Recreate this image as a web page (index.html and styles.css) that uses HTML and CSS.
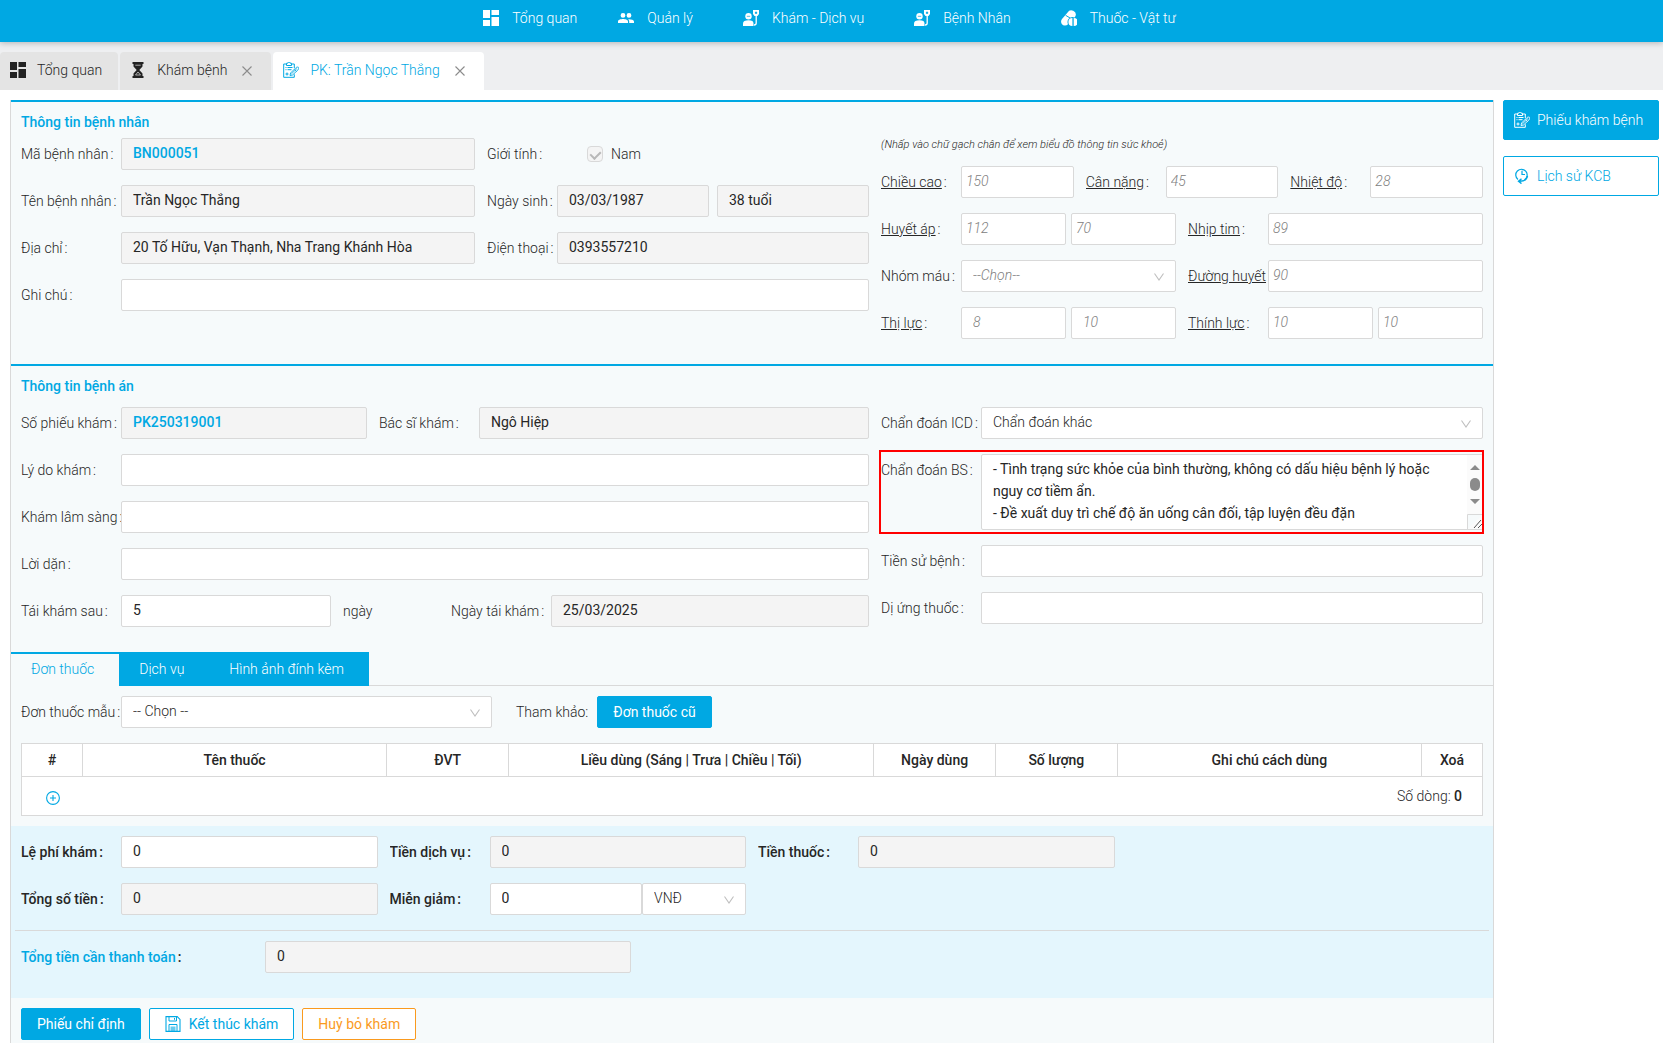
FILE: index.html
```html
<!DOCTYPE html>
<html lang="vi">
<head>
  <meta charset="UTF-8" />
  <title>PK: Trần Ngọc Thắng</title>
  <meta name="viewport" content="width=device-width, initial-scale=1.0" />
  <link rel="stylesheet" href="styles.css">
</head>
<body>
  <!-- shared icons -->
  <svg class="sprite" aria-hidden="true">
    <symbol id="i-dashboard" viewBox="0 0 16 16">
      <path d="M0 0h7v8H0zM8.500 0H16v5H8.500zM0 10h7v6H0zM8.500 7H16v9H8.500z" fill="currentColor" />
    </symbol>
    <symbol id="i-people" viewBox="0 0 16 16">
      <path d="M5 3a2.300 2.300 0 1 1 0 4.800A2.300 2.300 0 0 1 5 3zm6 0a2.300 2.300 0 1 1 0 4.800A2.300 2.300 0 0 1 11 3zM0 13v-1.600C0 9.800 3 9 5 9s5 .8 5 2.400V13zm11.200 0v-1.600c0-.9-.4-1.600-1-2.200 2.300-.2 5.800.5 5.800 2.200V13z" fill="currentColor" />
    </symbol>
    <symbol id="i-patient" viewBox="0 0 16 16">
      <circle cx="5.500" cy="6.300" r="3.200" fill="currentColor" />
      <path d="M0 16v-2.500C0 11.500 2 10.300 5.500 10.300s5 1.200 5 3.200V16z" fill="currentColor" />
      <path d="M10 0h6v4l-1.500 2h-3L10 4z" fill="currentColor" />
      <path d="M12.400 2h1.300v1.500h-1.300zM3.800 6.300h3.400" stroke="#00a8e3" fill="#00a8e3" stroke-width=".7" />
      <path d="M13.200 5.500V13c0 1.500-.8 2-2.200 2" stroke="currentColor" stroke-width="1.300" fill="none" />
    </symbol>
    <symbol id="i-pills" viewBox="0 0 16 16">
      <path d="M6.600 2.600a4.300 4.300 0 0 1 7.800 3.600c-.3.600-.6.900-.9 1.300a5 5 0 0 0-6.500 6.700A4 4 0 0 1 .8 14c-1-1.700-1-3.300.2-5z" fill="currentColor" />
      <path d="m4.600 5.300 5 3" stroke="#00a8e3" stroke-width="1" />
      <path d="M11.400 8v8a4 4 0 0 1 0-8zm1.300 0a4 4 0 0 1 0 8z" fill="currentColor" />
    </symbol>
    <symbol id="i-hourglass" viewBox="0 0 16 16">
      <path d="M2.500 0h11v2h-1v2.500L9.300 8l3.200 3.500V14h1v2h-11v-2h1v-2.500L6.700 8 3.500 4.500V2h-1z" fill="currentColor" />
      <path d="M5.300 3.200h5.400M8 10l2.500 3h-5z" stroke="#e4e4e4" stroke-width=".7" fill="none" />
    </symbol>
    <symbol id="i-clipboard" viewBox="0 0 16 16">
      <path d="M3.500 2H.7v13.300h10.600v-3M8.500 2h2.800v4M3.500 1.300h1.200a1.300 1.300 0 0 1 2.600 0h1.200v2.200h-5z" fill="none" stroke="currentColor" />
      <path d="M2.500 5.500h1M4.500 5.500h5M2.500 7.700h1M4.500 7.700h4M2.500 12h3M4 10.500v3" stroke="currentColor" />
      <path d="m7 13.500.6-2.500 5.200-5.200c.8-.8 2.300-.9 2.700-.5s.2 1.800-.6 2.700L9.500 13z" fill="none" stroke="currentColor" stroke-width=".9" />
      <path d="m8.300 12 5.700-5.600M11.500 7.500l2 2" stroke="currentColor" stroke-width=".8" />
    </symbol>
    <symbol id="i-history" viewBox="0 0 16 16">
      <path d="M4 11.500A5.700 5.700 0 1 1 10.500 11.800M8 2.800v3.700h3" fill="none" stroke="currentColor" stroke-width="1.200" />
      <path d="M13.500 8c-.6 3.800-4 5.500-8.500 5.300M7.500 10.800 4.500 13.300l3 2.300" fill="none" stroke="currentColor" stroke-width="1.400" />
    </symbol>
    <symbol id="i-save" viewBox="0 0 16 16">
      <path d="M1 .6h11.200L15 3.400v12H1z" fill="none" stroke="currentColor" stroke-width="1.100" />
      <path d="M4 1v4h7.500V1M9.500 2v1.800" fill="none" stroke="currentColor" />
      <path d="M4 15V8.500h8V15" fill="none" stroke="currentColor" />
      <path d="M5.500 10.500h5v5h-5z" fill="currentColor" opacity=".6" />
    </symbol>
    <symbol id="i-close" viewBox="0 0 10 10">
      <path d="M.5.5l9 9M9.500.5l-9 9" stroke="currentColor" stroke-width="1.100" />
    </symbol>
    <symbol id="i-down" viewBox="0 0 10 8">
      <path d="M.5.500 5 7 9.500.5" fill="none" stroke="currentColor" stroke-width="1.100" />
    </symbol>
    <symbol id="i-plus" viewBox="0 0 14 14">
      <circle cx="7" cy="7" r="6.400" fill="none" stroke="currentColor" stroke-width="1.100" />
      <path d="M7 4v6M4 7h6" stroke="currentColor" stroke-width="1.100" />
    </symbol>
  </svg>

  <header class="topbar">
    <nav class="nav">
      <a class="nav-item nav-home" href="#"><svg class="icon"><use href="#i-dashboard" /></svg>Tổng quan</a>
      <a class="nav-item" href="#"><svg class="icon"><use href="#i-people" /></svg>Quản lý</a>
      <a class="nav-item" href="#"><svg class="icon"><use href="#i-patient" /></svg>Khám - Dịch vụ</a>
      <a class="nav-item" href="#"><svg class="icon"><use href="#i-patient" /></svg>Bệnh Nhân</a>
      <a class="nav-item" href="#"><svg class="icon"><use href="#i-pills" /></svg>Thuốc - Vật tư</a>
    </nav>
  </header>

  <div class="page-tabs">
    <div class="page-tab"><svg class="icon dark"><use href="#i-dashboard" /></svg>Tổng quan</div>
    <div class="page-tab"><svg class="icon dark"><use href="#i-hourglass" /></svg>Khám bệnh
      <button class="close" type="button" aria-label="Đóng"><svg><use href="#i-close" /></svg></button></div>
    <div class="page-tab active"><svg class="icon"><use href="#i-clipboard" /></svg>PK: Trần Ngọc Thắng
      <button class="close" type="button" aria-label="Đóng"><svg><use href="#i-close" /></svg></button></div>
  </div>

  <div class="layout">
    <main class="panel">
      <!-- patient -->
      <section class="section patient">
        <div class="col-left">
          <h2 class="title">Thông tin bệnh nhân</h2>
          <div class="row">
            <div class="field w-main"><label for="code">Mã bệnh nhân</label><input class="strong" id="code" value="BN000051" readonly></div>
            <div class="field w-side narrow"><label for="gender">Giới tính</label>
              <div class="check"><input type="checkbox" id="gender" checked disabled><span>Nam</span></div></div>
          </div>
          <div class="row">
            <div class="field w-main"><label for="name">Tên bệnh nhân</label><input id="name" value="Trần Ngọc Thắng" readonly></div>
            <div class="field w-side narrow pair"><label for="dob">Ngày sinh</label><input id="dob" value="03/03/1987" readonly><input aria-label="Tuổi" value="38 tuổi" readonly></div>
          </div>
          <div class="row">
            <div class="field w-main"><label for="address">Địa chỉ</label><input id="address" value="20 Tố Hữu, Vạn Thạnh, Nha Trang Khánh Hòa" readonly></div>
            <div class="field w-side narrow"><label for="phone">Điện thoại</label><input id="phone" value="0393557210" readonly></div>
          </div>
          <div class="row">
            <div class="field"><label for="note">Ghi chú</label><input id="note"></div>
          </div>
        </div>

        <div class="col-right vitals">
          <p class="hint">(Nhấp vào chữ gạch chân để xem biểu đồ thông tin sức khoẻ)</p>
          <div class="row">
            <div class="field"><label for="height"><u>Chiều cao</u></label><input id="height" placeholder="150"></div>
            <div class="field"><label for="weight"><u>Cân nặng</u></label><input id="weight" placeholder="45"></div>
            <div class="field"><label for="temp"><u>Nhiệt độ</u></label><input id="temp" placeholder="28"></div>
          </div>
          <div class="row">
            <div class="field pair"><label for="bp"><u>Huyết áp</u></label><input id="bp" placeholder="112"><input aria-label="Tâm trương" placeholder="70"></div>
            <div class="field"><label for="pulse"><u>Nhịp tim</u></label><input id="pulse" placeholder="89"></div>
          </div>
          <div class="row">
            <div class="field"><label for="blood">Nhóm máu</label>
              <div class="select"><select class="empty" id="blood"><option>--Chọn--</option></select><svg><use href="#i-down" /></svg></div></div>
            <div class="field"><label for="sugar"><u>Đường huyết</u></label><input id="sugar" placeholder="90"></div>
          </div>
          <div class="row">
            <div class="field pair"><label for="eye"><u>Thị lực</u></label><input class="indent" id="eye" placeholder="8"><input class="indent" aria-label="Mắt phải" placeholder="10"></div>
            <div class="field pair"><label for="ear"><u>Thính lực</u></label><input id="ear" placeholder="10"><input aria-label="Tai phải" placeholder="10"></div>
          </div>
        </div>
      </section>

      <!-- medical record -->
      <section class="section record">
        <h2 class="title">Thông tin bệnh án</h2>
        <div class="cols">
          <div class="col-left">
            <div class="row">
              <div class="field w-number"><label for="sheet">Số phiếu khám</label><input class="strong" id="sheet" value="PK250319001" readonly></div>
              <div class="field w-doctor"><label for="doctor">Bác sĩ khám</label><input id="doctor" value="Ngô Hiệp" readonly></div>
            </div>
            <div class="row"><div class="field"><label for="reason">Lý do khám</label><input id="reason"></div></div>
            <div class="row"><div class="field"><label for="clinical">Khám lâm sàng</label><input id="clinical"></div></div>
            <div class="row"><div class="field"><label for="advice">Lời dặn</label><input id="advice"></div></div>
            <div class="row">
              <div class="field w-after"><label for="after">Tái khám sau</label><input id="after" value="5"></div>
              <span class="unit">ngày</span>
              <div class="field w-revisit"><label for="revisit">Ngày tái khám</label><input id="revisit" value="25/03/2025" readonly></div>
            </div>
          </div>
          <div class="col-right">
            <div class="row"><div class="field"><label for="icd">Chẩn đoán ICD</label>
              <div class="select"><select id="icd"><option>Chẩn đoán khác</option></select><svg><use href="#i-down" /></svg></div></div></div>
            <div class="row"><div class="field diagnosis"><label for="diag">Chẩn đoán BS</label>
              <textarea id="diag">- Tình trạng sức khỏe của bình thường, không có dấu hiệu bệnh lý hoặc nguy cơ tiềm ẩn.
- Đề xuất duy trì chế độ ăn uống cân đối, tập luyện đều đặn</textarea>
              <svg class="scroll" viewBox="0 0 16 74">
                <path d="M0 0h16v74H0z" fill="#fbfbfb" />
                <path d="M3 15h10L8 10zM3 44h10l-5 5z" fill="#8b8b8b" />
                <rect x="3" y="23" width="10" height="13" rx="5" fill="#8b8b8b" />
                <path d="M.5 74V59.500H16" fill="#f6fafb" stroke="#d9d9d9" />
                <path d="m7 73 7-8M11 73l4-4" stroke="#555" />
              </svg></div></div>
            <div class="row"><div class="field"><label for="history">Tiền sử bệnh</label><input id="history"></div></div>
            <div class="row"><div class="field"><label for="allergy">Dị ứng thuốc</label><input id="allergy"></div></div>
          </div>
        </div>
      </section>

      <!-- prescription -->
      <div class="tabs">
        <button class="tab active" type="button">Đơn thuốc</button>
        <button class="tab" type="button">Dịch vụ</button>
        <button class="tab" type="button">Hình ảnh đính kèm</button>
      </div>
      <section class="prescription">
        <div class="toolbar">
          <div class="field template"><label for="tpl">Đơn thuốc mẫu</label>
            <div class="select"><select id="tpl"><option>-- Chọn --</option></select><svg><use href="#i-down" /></svg></div></div>
          <span class="ref">Tham khảo:</span>
          <button class="btn primary" type="button">Đơn thuốc cũ</button>
        </div>
        <table class="drugs">
          <thead>
            <tr>
              <th class="c1">#</th>
              <th class="c5">Tên thuốc</th>
              <th class="c2">ĐVT</th>
              <th class="c6">Liều dùng (Sáng | Trưa | Chiều | Tối)</th>
              <th class="c2">Ngày dùng</th>
              <th class="c2">Số lượng</th>
              <th class="c5">Ghi chú cách dùng</th>
              <th class="c1">Xoá</th>
            </tr>
          </thead>
          <tbody>
            <tr>
              <td class="add"><button type="button" aria-label="Thêm thuốc"><svg><use href="#i-plus" /></svg></button></td>
              <td class="count" colspan="7">Số dòng: <b>0</b></td>
            </tr>
          </tbody>
        </table>
      </section>

      <!-- fees -->
      <section class="fees">
        <div class="fee-grid">
          <div class="field"><label for="fee">Lệ phí khám</label><input id="fee" value="0"></div>
          <div class="field"><label for="service">Tiền dịch vụ</label><input id="service" value="0" readonly></div>
          <div class="field"><label for="drug">Tiền thuốc</label><input id="drug" value="0" readonly></div>
          <div class="field new-line"><label for="sum">Tổng số tiền</label><input id="sum" value="0" readonly></div>
          <div class="field discount"><label for="off">Miễn giảm</label><input id="off" value="0">
            <div class="select"><select aria-label="Đơn vị"><option>VNĐ</option></select><svg><use href="#i-down" /></svg></div></div>
        </div>
        <div class="total">
          <div class="field"><label for="total"><span>Tổng tiền cần thanh toán</span></label><input id="total" value="0" readonly></div>
        </div>
      </section>

      <div class="actions">
        <button class="btn primary" type="button">Phiếu chỉ định</button>
        <button class="btn outline" type="button"><svg class="icon"><use href="#i-save" /></svg>Kết thúc khám</button>
        <button class="btn warning" type="button">Huỷ bỏ khám</button>
      </div>
    </main>

    <aside class="side">
      <button class="side-btn current" type="button"><svg class="icon"><use href="#i-clipboard" /></svg>Phiếu khám bệnh</button>
      <button class="side-btn" type="button"><svg class="icon"><use href="#i-history" /></svg>Lịch sử KCB</button>
    </aside>
  </div>
</body>
</html>
```
FILE: styles.css
```css
* {
  box-sizing: border-box;
}

body {
  margin: 0;
  min-height: 100vh;
  display: flex;
  flex-direction: column;
  background: #fff;
  color: #262626;
  font-family: Roboto, "Noto Sans", sans-serif;
  font-size: 14px;
  font-weight: 300;
  line-height: 22px;
}

button,
input,
select,
textarea {
  font: inherit;
  color: inherit;
}

button {
  cursor: pointer;
}

.sprite {
  position: absolute;
  width: 0;
  height: 0;
}

.icon {
  flex: none;
  width: 16px;
  height: 16px;
}

/* header */
.topbar {
  position: relative;
  height: 42px;
  background: #00a8e3;
  box-shadow: 0 1px 6px rgba(0, 0, 0, 0.25);
}

.nav {
  display: flex;
  justify-content: center;
  padding-right: 4px;
}

.nav-item {
  display: flex;
  align-items: center;
  gap: 13px;
  height: 35px;
  padding: 0 25px;
  color: #fff;
  text-decoration: none;
}

.nav-home {
  padding-right: 16px;
}

/* opened pages */
.page-tabs {
  display: flex;
  gap: 2px;
  padding-top: 10px;
  background: #eeeff1;
}

.page-tab {
  display: flex;
  align-items: center;
  gap: 11px;
  height: 38px;
  padding: 0 16px 2px 10px;
  background: #e4e4e4;
  border-radius: 4px 4px 0 0;
}

.page-tab.active {
  background: #fff;
  color: #00a8e3;
}

.dark {
  color: #222;
}

.close {
  display: flex;
  padding: 4px 3px 2px 4px;
  border: 0;
  background: none;
  color: #8c8c8c;
}

.close svg {
  width: 10px;
  height: 10px;
}

/* layout */
.layout {
  flex: 1;
  display: flex;
  gap: 9px;
  padding: 10px 4px 0 10px;
}

.panel {
  flex: 1;
  min-width: 0;
  background: #f6fafb;
  border: 1px solid #d9d9d9;
  border-width: 0 1px;
}

.side {
  width: 156px;
}

.side-btn {
  display: flex;
  align-items: center;
  gap: 7px;
  width: 100%;
  height: 40px;
  margin-bottom: 16px;
  padding: 0 10px 1px;
  background: #fff;
  border: 1px solid #00a8e3;
  border-radius: 2px;
  color: #00a8e3;
  white-space: nowrap;
}

.side-btn.current {
  background: #00a8e3;
  color: #fff;
}

/* sections */
.section {
  padding: 9px 10px 10px;
  border-top: 2px solid #00a8e3;
}

.patient,
.cols {
  display: flex;
  gap: 12px;
}

.col-left {
  flex: 848 1 0;
  min-width: 0;
}

.col-right {
  flex: 602 1 0;
  min-width: 0;
}

.title {
  margin: 0 0 5px;
  color: #00a8e3;
  font-size: 14px;
  font-weight: 500;
  line-height: 22px;
}

.record .title {
  margin-bottom: 10px;
}

.row {
  display: flex;
  gap: 12px;
  margin-bottom: 15px;
}

.field {
  position: relative;
  flex: 1 1 0;
  display: flex;
  min-width: 0;
}

.field label {
  flex: none;
  width: 100px;
  line-height: 32px;
  white-space: nowrap;
  overflow: hidden;
}

.field label::after {
  content: ":";
  margin-left: 2px;
}

.narrow label {
  width: 70px;
}

.vitals label {
  width: 80px;
}

.field > input,
.select,
.field textarea {
  flex: 1 1 0;
  min-width: 0;
}

.field > input,
select,
textarea {
  height: 32px;
  padding: 0 11px 2px;
  background: #fff;
  border: 1px solid #d9d9d9;
  border-radius: 2px;
  outline: none;
}

.field > input,
textarea {
  font-weight: 400;
}

.field > input[readonly] {
  background: #f4f4f4;
}

.field > input.strong {
  color: #00a8e3;
  font-weight: 500;
}

.narrow.pair {
  gap: 8px;
}

.narrow.pair label {
  margin-right: -8px;
}

.vitals .pair {
  gap: 5px;
}

.vitals .pair label {
  margin-right: -5px;
}

.vitals .field > input {
  padding: 0 4px 2px;
}

.vitals .field > input.indent {
  padding: 0 11px 2px;
}

.vitals input::placeholder,
.empty {
  color: #808080;
  font-style: italic;
  font-weight: 300;
}

.hint {
  margin: 23px 0 10px;
  font-size: 11px;
  font-style: italic;
}

.w-main { flex-grow: 454; }
.w-side { flex-grow: 382; }
.w-number { flex-grow: 346; }
.w-doctor { flex-grow: 490; }
.w-after { flex-grow: 310; }
.w-revisit { flex-grow: 418; }

.unit {
  width: 96px;
  line-height: 32px;
}

.select {
  position: relative;
}

.select select {
  appearance: none;
  width: 100%;
}

.select svg {
  position: absolute;
  top: 13px;
  right: 12px;
  width: 10px;
  height: 8px;
  color: #bfbfbf;
  pointer-events: none;
}

.check {
  display: flex;
  align-items: center;
  gap: 8px;
  padding-left: 30px;
}

.check input {
  position: relative;
  appearance: none;
  width: 16px;
  height: 16px;
  margin: 0;
  background: #f4f4f4;
  border: 1px solid #d9d9d9;
  border-radius: 4px;
}

.check input::after {
  content: "";
  position: absolute;
  top: 2px;
  left: 4px;
  width: 5px;
  height: 8px;
  border: solid #b8b8b8;
  border-width: 0 2px 2px 0;
  transform: rotate(45deg);
}

/* diagnosis box, marked in red */
.diagnosis::after {
  content: "";
  position: absolute;
  inset: -4px -1px -4px -2px;
  border: 2px solid #f00;
  pointer-events: none;
}

textarea {
  height: 76px;
  padding: 3px 27px 4px 11px;
  line-height: 22px;
  overflow: hidden;
  resize: none;
}

.scroll {
  position: absolute;
  top: 1px;
  right: 0;
  width: 16px;
  height: 74px;
}

/* inner tabs */
.tabs {
  display: flex;
  border-bottom: 1px solid #d9d9d9;
}

.tab {
  height: 34px;
  margin-bottom: -1px;
  padding: 0 25px 2px 20px;
  background: #00a8e3;
  border: 0;
  border-top: 2px solid #00a8e3;
  color: #fff;
}

.tab.active {
  background: #f6fafb;
  color: #00a8e3;
}

.prescription {
  padding: 10px;
}

.toolbar {
  display: flex;
  align-items: center;
  margin-bottom: 15px;
}

.template {
  flex: 0 0 471px;
}

.ref {
  margin: 0 9px 0 24px;
}

.btn {
  display: inline-flex;
  align-items: center;
  gap: 8px;
  height: 32px;
  padding: 0 15px 1px;
  background: #fff;
  border: 1px solid #00a8e3;
  border-radius: 2px;
  color: #00a8e3;
  font-weight: 400;
  white-space: nowrap;
}

.btn.primary {
  background: #00a8e3;
  color: #fff;
}

.btn.warning {
  border-color: #fa9a1e;
  color: #fa9a1e;
}

.drugs {
  width: 100%;
  table-layout: fixed;
  border-collapse: collapse;
  background: #fff;
  border: 1px solid #d9d9d9;
}

.drugs th {
  height: 33px;
  padding: 0 0 1px;
  border: 1px solid #d9d9d9;
  font-weight: 500;
}

.drugs td {
  height: 39px;
  padding: 0 20px 0 0;
}

.c1 { width: 4.17%; }
.c2 { width: 8.33%; }
.c5 { width: 20.83%; }
.c6 { width: 25%; }

.drugs .add {
  padding: 8px 0 0 2px;
  text-align: center;
}

.add button {
  padding: 0;
  border: 0;
  background: none;
  color: #00a8e3;
}

.add svg {
  display: block;
  width: 14px;
  height: 14px;
}

.count {
  text-align: right;
}

.count b {
  font-weight: 500;
}

/* fees */
.fees {
  padding: 10px 4px 25px;
  background: #e4f6fd;
}

.fees label {
  font-weight: 500;
}

.fee-grid {
  display: grid;
  grid-template-columns: repeat(4, 1fr);
  gap: 15px 12px;
  padding: 0 6px 15px;
  border-bottom: 1px solid #d9d9d9;
}

.new-line {
  grid-column: 1;
}

.discount .select {
  flex: 0 0 104px;
}

.total {
  padding: 10px 6px 0;
}

.total label {
  width: 244px;
}

.total span {
  color: #00a8e3;
}

.total .field > input {
  flex: 0 0 25%;
}

.actions {
  display: flex;
  gap: 8px;
  padding: 10px 10px 0;
}
```
